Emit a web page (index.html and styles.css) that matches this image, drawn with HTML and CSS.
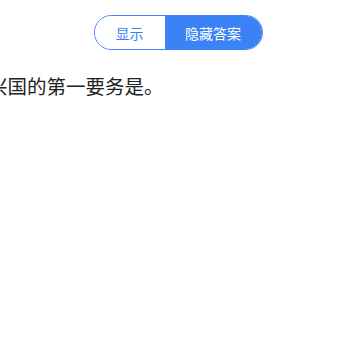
FILE: index.html
```html
<!DOCTYPE html>
<html lang="zh">
<head>
    <meta charset="UTF-8">
    <meta name="viewport" content="width=device-width, initial-scale=1.0">
    <title>答案</title>
    <link rel="stylesheet" href="styles.css">
</head>
<body>
    <div class="toolbar">
        <div class="toggle">
            <button class="seg">显示</button>
            <button class="seg active">隐藏答案</button>
        </div>
    </div>
    <p class="answer">兴国的第一要务是。</p>
</body>
</html>
```

FILE: styles.css
```css
body {
    margin: 0;
    font-family: "Noto Sans CJK SC", "Noto Sans", sans-serif;
    background-color: #fff;
    overflow: hidden;
}
.toolbar {
    display: flex;
    justify-content: center;
    padding: 15px 4px 0 0;
}
.toggle {
    display: flex;
    height: 35px;
    box-sizing: border-box;
    border: 1px solid #3b82f6;
    border-radius: 18px;
    overflow: hidden;
}
.seg {
    font-family: inherit;
    font-size: 14px;
    border: none;
    outline: none;
    background-color: #fff;
    color: #3b82f6;
    padding: 0;
    width: 70px;
    cursor: pointer;
}
.seg.active {
    background-color: #3b82f6;
    color: #fff;
    width: 97px;
}
.answer {
    margin: 22px 0 0 -12px;
    font-size: 19.5px;
    line-height: 27px;
    color: #222;
    white-space: nowrap;
}
```
